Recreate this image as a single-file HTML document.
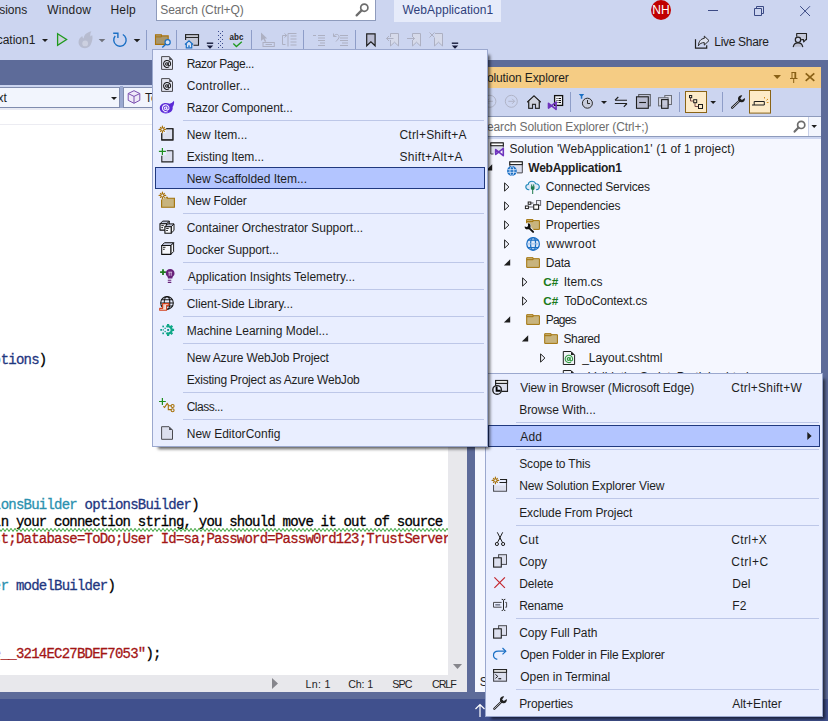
<!DOCTYPE html>
<html lang="en"><head><meta charset="utf-8"><title>WebApplication1 - Microsoft Visual Studio</title>
<style>
*{box-sizing:border-box;margin:0;padding:0}
html,body{width:828px;height:721px;overflow:hidden;background:#ccd5f0}
body{position:relative;font-family:"Liberation Sans",sans-serif;font-size:12px;color:#1e1e1e;line-height:1}
.a{position:absolute}
.t{position:absolute;white-space:nowrap;line-height:14px;height:14px}
.code{position:absolute;white-space:pre;font-family:"Liberation Mono",monospace;font-size:14px;letter-spacing:-0.785px;line-height:16px;height:16px;color:#000;-webkit-text-stroke:0.3px currentColor}
.menu{position:absolute;background:#e9eeff;border:1px solid #9ba8ce;box-shadow:4px 4px 3px -2px rgba(0,0,0,.62)}
.mi{position:absolute;white-space:nowrap;height:22px;line-height:22px}
.sep{position:absolute;height:1px;background:#bdc7e8}
.hl{position:absolute;background:#b3c5ff;border:1px solid #20397f}
svg{position:absolute;overflow:visible}
.fc{letter-spacing:-0.085px}.ty{color:#2b91af}.pa{color:#1f377f}.st{color:#a31515}
</style></head>
<body>
<div class="a" style="left:0px;top:0px;width:828px;height:60px;background:#ccd5f0;"></div>
<div class="a" style="left:0px;top:60px;width:828px;height:661px;background:#5d6b99;"></div>
<div class="a" style="left:0px;top:699px;width:828px;height:22px;background:#40508d;"></div>
<div class="t" style="left:-31.5px;top:3px;">Extensions</div>
<div class="t" style="left:47.3px;top:3px;letter-spacing:0.2px;">Window</div>
<div class="t" style="left:110.5px;top:3px;letter-spacing:0.2px;">Help</div>
<div class="a" style="left:156px;top:-1px;width:220px;height:22px;background:#ffffff;border:1px solid #8e9bbc"></div>
<div class="t" style="left:160.2px;top:3px;letter-spacing:-0.057px;color:#6d6d6d">Search (Ctrl+Q)</div>
<svg style="left:354px;top:2px;" width="16" height="16" viewBox="0 0 16 16"><circle cx="10.300" cy="5.700" r="3.600" fill="none" stroke="#6d6d6d" stroke-width="1.700"/><path d="M7.600 8.400L2.600 13.400" stroke="#6d6d6d" stroke-width="2.200" stroke-linecap="round"/></svg>
<div class="a" style="left:394px;top:0px;width:107px;height:22px;background:#e6ebfa;"></div>
<div class="t" style="left:402.4px;top:3px;letter-spacing:0.071px;color:#2f3f7a">WebApplication1</div>
<div class="a" style="left:651px;top:0;width:20px;height:20px;border-radius:50%;background:#c00000;color:#fff;font-size:12px;line-height:20px;text-align:center">NH</div>
<svg style="left:700px;top:0" width="128" height="22" viewBox="700 0 128 22"><path d="M708 10.500H718" stroke="#3b4a85" stroke-width="1" fill="none"/><path d="M754.500 8.500H761.500V15.500H754.500ZM756.500 8.500V6.500H763.500V13.500H761.500" stroke="#3b4a85" stroke-width="1" fill="none"/><path d="M800.200 6.200L810 16M810 6.200L800.200 16" stroke="#3b4a85" stroke-width="1" fill="none"/></svg>
<div class="t" style="left:-54.5px;top:33px;">WebApplication1</div>
<svg style="left:42px;top:39px" width="6" height="3" viewBox="0 0 6 3"><path d="M0 0H6L3.0 3Z" fill="#1e1e1e"/></svg>
<svg style="left:0;top:0" width="828" height="60" viewBox="0 0 828 60"><path d="M57.600 33.700L66.600 39.500L57.600 45.300Z" fill="#cdd0de" stroke="#1e9a1e" stroke-width="1.300" stroke-linejoin="miter"/><g transform="translate(85.500 39.800) scale(1.07) translate(-85.500 -39.800)"><path d="M85 47.600C81.500 47.600 79 45.100 79 42C79 39.500 80.400 37.400 82.500 36.200C82.600 37.300 83 38.100 83.800 38.500C84 35.500 86.200 32.800 91 31.700C89.900 33.500 89.700 35 90.300 36.700C90.700 36.400 91.300 35.800 91.700 35.300C92.500 38 91.800 40.200 91.100 42.600C90.300 45.600 88 47.600 85 47.600Z" fill="#b7bcd0"/><circle cx="85.200" cy="43.200" r="2.700" fill="#ccd0e0"/></g><path d="M98.700 39H105.300L102 42.300Z" fill="#70727c"/><path d="M122.800 34.500A6.200 6.200 0 1 1 115.200 36" fill="none" stroke="#1a6fc4" stroke-width="1.400"/><path d="M113.200 33.300H117.900V38" fill="none" stroke="#1a6fc4" stroke-width="1.400"/><path d="M133.700 39H140.300L137 42.300Z" fill="#1e1e1e"/><rect x="146" y="30" width="1" height="20" fill="#8e9dc8"/><rect x="176" y="30" width="1" height="20" fill="#8e9dc8"/><rect x="251" y="30" width="1" height="20" fill="#8e9dc8"/><rect x="303" y="30" width="1" height="20" fill="#8e9dc8"/><rect x="355" y="30" width="1" height="20" fill="#8e9dc8"/><path d="M155.500 34.800H161.400V35.900H168.200V44.400H155.500Z" fill="#a8966c" stroke="#a9730c" stroke-width="1.100" stroke-linejoin="miter"/><path d="M155.500 36.900H161.400V35.900" stroke="#a9730c" stroke-width="1" fill="none"/><circle cx="167.600" cy="42.300" r="2.600" fill="#d8e4f6" stroke="#1a6fc4" stroke-width="1.200"/><path d="M165.700 44.300L162.300 47.500" stroke="#1a6fc4" stroke-width="1.400" fill="none"/><path d="M193.500 45.200H198.500V34.700H185.600V40" fill="#c6c9d8" stroke="#212121" stroke-width="1.100"/><rect x="185.600" y="34.700" width="12.900" height="2.700" fill="#dfe2ee" stroke="#212121" stroke-width="1.100"/><path d="M185 44.500L189 40.800L193 44.500M186.300 43.800V47.800H191.700V43.800" fill="#dfe8f8" stroke="#1a6fc4" stroke-width="1.200"/><rect x="188.300" y="45.300" width="1.400" height="2" fill="#1a6fc4"/><path d="M206.8 43.200H213.20000000000002" stroke="#151a3a" stroke-width="1.400"/><path d="M206.8 45.600H213.20000000000002L210.0 48.700Z" fill="#151a3a"/><path d="M451.8 43.200H458.2" stroke="#151a3a" stroke-width="1.400"/><path d="M451.8 45.600H458.2L455.0 48.700Z" fill="#151a3a"/><path d="M218 31h1v1h-1zM222 31h1v1h-1zM218 35h1v1h-1zM222 35h1v1h-1zM218 39h1v1h-1zM222 39h1v1h-1zM218 43h1v1h-1zM222 43h1v1h-1zM218 47h1v1h-1zM222 47h1v1h-1zM220 33h1v1h-1zM220 37h1v1h-1zM220 41h1v1h-1zM220 45h1v1h-1z" fill="#3a4a8c"/><text x="229.600" y="40.200" font-family="Liberation Sans, sans-serif" font-weight="bold" font-size="9" fill="#212121" textLength="13.800" lengthAdjust="spacingAndGlyphs">abc</text><path d="M233.300 43.500L236.400 46.500L241.800 41.700" fill="none" stroke="#1e9a1e" stroke-width="1.300"/><path d="M261 32.600V41L263.300 38.900L265 42L266.200 41.300L264.700 38.500H267.200Z" fill="#adb0c2"/><rect x="263" y="42.500" width="11.300" height="4" fill="none" stroke="#adb0c2" stroke-width="1"/><path d="M265.500 44.500H272" stroke="#adb0c2" stroke-width="1"/><path d="M290.500 33.500V46.500M290.500 33.500H299M293 36H299M293 39H299M293 42H299M293 45H299" stroke="#adb0c2" stroke-width="1" fill="none" transform="translate(-2.500 0)"/><path d="M285.500 44.500H282.500V35.500H286.500M284.500 33.500L286.800 35.500L284.500 37.500" stroke="#adb0c2" stroke-width="1" fill="none"/><path d="M313 35.500H316M318 35.500H325M318 38H325M318 40.500H325M320 43H325M318 45.500H325" stroke="#adb0c2" stroke-width="1" fill="none"/><path d="M340 35.500H348M340 38H348M340 40.500H348M342 43H348M340 45.500H348" stroke="#adb0c2" stroke-width="1" fill="none"/><path d="M333.500 33.500V36.500H336.500M333.700 36.300C335 34 338.500 33.500 339 36.500C339.300 38.500 337.500 39.500 336 41.500" stroke="#adb0c2" stroke-width="1" fill="none"/><path d="M366.700 33.800H375.100V45.800L370.900 41.800L366.700 45.800Z" fill="#b9bcd2" stroke="#212121" stroke-width="1.200" stroke-linejoin="miter"/><path d="M390.500 37V33.500H398.500V46L394.500 42.200L390.500 46V40" fill="#d6daea" stroke="#adb0c2" stroke-width="1"/><path d="M393.500 38.500H386.500M389 36L386.500 38.500L389 41" fill="none" stroke="#adb0c2" stroke-width="1"/><path d="M412.500 37V33.500H420.500V46L416.500 42.200L412.500 46V40" fill="#d6daea" stroke="#adb0c2" stroke-width="1"/><path d="M407 38.500H414.500M412 36L414.500 38.500L412 41" fill="none" stroke="#adb0c2" stroke-width="1"/><path d="M435 33.500H442.500V46L438.500 42.200L434.500 46V38" fill="#d6daea" stroke="#adb0c2" stroke-width="1"/><path d="M429.500 32.500L434.500 37.500M434.500 32.500L429.500 37.500" fill="none" stroke="#adb0c2" stroke-width="1"/><path d="M695.500 39.200V48.200H706.700V45.200" fill="none" stroke="#212121" stroke-width="1.200"/><path d="M698.400 45.800C698.600 41.500 700.800 38.700 704.300 38.400V36.100L709 40.600L704.300 45.100V42.600C701.600 42.600 699.800 43.600 698.400 45.800Z" fill="#dde1ee" stroke="#212121" stroke-width="0.950" stroke-linejoin="round"/><path d="M796.700 36.800V33.500H806.500V39.600H805.800L803.700 42L803.500 39.600H801.200" fill="#c5c9da" stroke="#212121" stroke-width="1.100" stroke-linejoin="round"/><circle cx="798" cy="39.800" r="2.700" fill="#cdd3ea" stroke="#212121" stroke-width="1.200"/><path d="M793.300 46.700C793.800 44.200 795.600 42.900 798 42.900C800.400 42.900 802.200 44.200 802.700 46.700" fill="#b9bdd1" stroke="#212121" stroke-width="1.200" stroke-linecap="round"/></svg>
<div class="t" style="left:714.3px;top:35px;letter-spacing:-0.311px;">Live Share</div>
<div class="a" style="left:0px;top:85px;width:467px;height:2px;background:#ccd5f0;"></div>
<div class="a" style="left:-2px;top:87px;width:122px;height:21px;background:#f2f5fd;border:1px solid #808cae"></div>
<div class="a" style="left:120px;top:86px;width:3px;height:23px;background:#9aa8d0;"></div>
<div class="a" style="left:123px;top:87px;width:344px;height:21px;background:#f2f5fd;border:1px solid #808cae"></div>
<div class="t" style="left:-34.6px;top:91px;">Context</div>
<svg style="left:111px;top:97px" width="6" height="3" viewBox="0 0 6 3"><path d="M0 0H6L3.0 3Z" fill="#1e1e1e"/></svg>
<svg style="left:127px;top:90px" width="14" height="14" viewBox="0 0 14 14"><path d="M7 0.700L12.800 3.500V10.300L7 13.300L1.200 10.300V3.500Z" fill="#efe9f8" stroke="#7b50b0" stroke-width="1" stroke-linejoin="round"/><path d="M1.300 3.600L7 6.400L12.700 3.600M7 6.400V13.200" fill="none" stroke="#7b50b0" stroke-width="1"/></svg>
<div class="t" style="left:145px;top:91px;">ToDoContext</div>
<div class="a" style="left:0px;top:108px;width:467px;height:2px;background:#e9eaf3;"></div>
<div class="a" style="left:0px;top:110px;width:467px;height:582px;background:#ffffff;"></div>
<div class="a" style="left:0px;top:124px;width:448px;height:1px;background:#ececf2;"></div>
<div class="a" style="left:448px;top:110px;width:19px;height:582px;background:#e8e8ec;"></div>
<div class="a" style="left:0px;top:675px;width:467px;height:17px;background:#e8e8ec;"></div>
<svg style="left:453px;top:663.5px" width="9" height="5" viewBox="0 0 9 5"><path d="M0 0H9L4.500 5Z" fill="#86868c"/></svg>
<svg style="left:272px;top:678px" width="7" height="11" viewBox="0 0 7 11"><path d="M0 0V11L6 5.500Z" fill="#86868c"/></svg>
<div class="t" style="left:305.6px;top:677px;letter-spacing:0.25px;font-size:10.7px">Ln: 1</div>
<div class="t" style="left:348.2px;top:677px;letter-spacing:-0.15px;font-size:10.7px">Ch: 1</div>
<div class="t" style="left:392.2px;top:677px;letter-spacing:-0.9px;font-size:10.7px">SPC</div>
<div class="t" style="left:432.0px;top:677px;letter-spacing:-1.067px;font-size:10.7px">CRLF</div>
<div class="a" style="left:0;top:110px;width:448px;height:565px;overflow:hidden">
<div class="code" style="left:-7.6px;top:242px"><span class="pa"><span class="fc">p</span>tions</span>)</div>
<div class="code" style="left:-7.6px;top:387px"><span class="ty"><span class="fc">i</span>onsBuilder</span> <span class="pa">optionsBuilder</span>)</div>
<div class="code" style="left:-7.6px;top:404px"><span class="fc">i</span>n your connection string, you should move it out of source code.</div>
<svg style="left:0;top:418px" width="448" height="5" viewBox="0 0 448 5"><path d="M-1 0.300 L1 3.5 L3 0.3 L5 3.5 L7 0.3 L9 3.5 L11 0.3 L13 3.5 L15 0.3 L17 3.5 L19 0.3 L21 3.5 L23 0.3 L25 3.5 L27 0.3 L29 3.5 L31 0.3 L33 3.5 L35 0.3 L37 3.5 L39 0.3 L41 3.5 L43 0.3 L45 3.5 L47 0.3 L49 3.5 L51 0.3 L53 3.5 L55 0.3 L57 3.5 L59 0.3 L61 3.5 L63 0.3 L65 3.5 L67 0.3 L69 3.5 L71 0.3 L73 3.5 L75 0.3 L77 3.5 L79 0.3 L81 3.5 L83 0.3 L85 3.5 L87 0.3 L89 3.5 L91 0.3 L93 3.5 L95 0.3 L97 3.5 L99 0.3 L101 3.5 L103 0.3 L105 3.5 L107 0.3 L109 3.5 L111 0.3 L113 3.5 L115 0.3 L117 3.5 L119 0.3 L121 3.5 L123 0.3 L125 3.5 L127 0.3 L129 3.5 L131 0.3 L133 3.5 L135 0.3 L137 3.5 L139 0.3 L141 3.5 L143 0.3 L145 3.5 L147 0.3 L149 3.5 L151 0.3 L153 3.5 L155 0.3 L157 3.5 L159 0.3 L161 3.5 L163 0.3 L165 3.5 L167 0.3 L169 3.5 L171 0.3 L173 3.5 L175 0.3 L177 3.5 L179 0.3 L181 3.5 L183 0.3 L185 3.5 L187 0.3 L189 3.5 L191 0.3 L193 3.5 L195 0.3 L197 3.5 L199 0.3 L201 3.5 L203 0.3 L205 3.5 L207 0.3 L209 3.5 L211 0.3 L213 3.5 L215 0.3 L217 3.5 L219 0.3 L221 3.5 L223 0.3 L225 3.5 L227 0.3 L229 3.5 L231 0.3 L233 3.5 L235 0.3 L237 3.5 L239 0.3 L241 3.5 L243 0.3 L245 3.5 L247 0.3 L249 3.5 L251 0.3 L253 3.5 L255 0.3 L257 3.5 L259 0.3 L261 3.5 L263 0.3 L265 3.5 L267 0.3 L269 3.5 L271 0.3 L273 3.5 L275 0.3 L277 3.5 L279 0.3 L281 3.5 L283 0.3 L285 3.5 L287 0.3 L289 3.5 L291 0.3 L293 3.5 L295 0.3 L297 3.5 L299 0.3 L301 3.5 L303 0.3 L305 3.5 L307 0.3 L309 3.5 L311 0.3 L313 3.5 L315 0.3 L317 3.5 L319 0.3 L321 3.5 L323 0.3 L325 3.5 L327 0.3 L329 3.5 L331 0.3 L333 3.5 L335 0.3 L337 3.5 L339 0.3 L341 3.5 L343 0.3 L345 3.5 L347 0.3 L349 3.5 L351 0.3 L353 3.5 L355 0.3 L357 3.5 L359 0.3 L361 3.5 L363 0.3 L365 3.5 L367 0.3 L369 3.5 L371 0.3 L373 3.5 L375 0.3 L377 3.5 L379 0.3 L381 3.5 L383 0.3 L385 3.5 L387 0.3 L389 3.5 L391 0.3 L393 3.5 L395 0.3 L397 3.5 L399 0.3 L401 3.5 L403 0.3 L405 3.5 L407 0.3 L409 3.5 L411 0.3 L413 3.5 L415 0.3 L417 3.5 L419 0.3 L421 3.5 L423 0.3 L425 3.5 L427 0.3 L429 3.5 L431 0.3 L433 3.5 L435 0.3 L437 3.5 L439 0.3 L441 3.5 L443 0.3 L445 3.5 L447 0.3 L449 3.5 L451 0.3" fill="none" stroke="#2f9e2f" stroke-width="0.950" stroke-linejoin="round"/></svg>
<div class="code" style="left:-7.6px;top:421px"><span class="st"><span class="fc">s</span>t;Database=ToDo;User Id=sa;Password=Passw0rd123;TrustServerCertificate=true</span></div>
<div class="code" style="left:-7.6px;top:468px"><span class="ty"><span class="fc">e</span>r</span> <span class="pa">modelBuilder</span>)</div>
<div class="code" style="left:-7.6px;top:536px"><span class="st"><span class="fc">e</span>__3214EC27BDEF7053"</span>);</div>
</div>
<div class="a" style="left:475px;top:67px;width:346px;height:21px;background:#f5cc84;"></div>
<div class="t" style="left:479px;top:71px;letter-spacing:-0.1px">Solution Explorer</div>
<div class="a" style="left:475px;top:88px;width:346px;height:29px;background:#ccd5f0;"></div>
<div class="a" style="left:475px;top:116px;width:346px;height:21px;background:#ffffff;border:1px solid #8e9bbc;border-right:none"></div>
<div class="a" style="left:808px;top:117px;width:13px;height:19px;background:#f2f5fd;border-left:1px solid #c8d0e8"></div>
<div class="t" style="left:479px;top:120px;color:#6d6d6d;letter-spacing:-0.11px">Search Solution Explorer (Ctrl+;)</div>
<svg style="left:475px;top:60px" width="353" height="80" viewBox="475 60 353 80"><path d="M773.400 75H781L777.200 79Z" fill="#8a6116"/><path d="M791.500 72.500H796M792 72.500V78.500M790 78.500H797.500M793.700 78.500V83" fill="none" stroke="#8a6116" stroke-width="1"/><path d="M795.300 72V79" stroke="#8a6116" stroke-width="1.800"/><path d="M805.700 73.300L814.300 80.900M814.300 73.300L805.700 80.900" fill="none" stroke="#8a6116" stroke-width="1.700"/><circle cx="489.9" cy="101.300" r="6" fill="none" stroke="#adb0c2" stroke-width="0.9"/><path d="M492.9 101.300H486.9M489.09999999999997 98.800L486.59999999999997 101.300L489.09999999999997 103.800" fill="none" stroke="#adb0c2" stroke-width="0.900"/><circle cx="511.3" cy="101.300" r="6" fill="none" stroke="#adb0c2" stroke-width="0.9"/><path d="M508.3 101.300H514.3M512.1 98.800L514.6 101.300L512.1 103.800" fill="none" stroke="#adb0c2" stroke-width="0.900"/><path d="M527.300 102.200L534 95.900L540.700 102.200M528.800 101V108.300H532.500V104.300H535.500V108.300H539.200V101" fill="#d0d3de" stroke="#2a2a2a" stroke-width="1.100" stroke-linejoin="miter"/><path d="M534 96.600L539 101.300V108H535.800V104H532.200V108H529V101.300Z" fill="#d0d3de"/><path d="M527.300 102.200L534 95.900L540.700 102.200M528.800 101.200V108.300H532.500V104.300H535.500V108.300H539.200V101.200" fill="none" stroke="#2a2a2a" stroke-width="1.100"/><rect x="554.600" y="95.600" width="8" height="9.800" fill="#f2f3f8" stroke="#111" stroke-width="1.300"/><path d="M556.500 98.500H557.500M558.500 98.500H561M556.500 100.500H557.500M558.500 100.500H561M556.500 102.500H557.500M558.500 102.500H561" stroke="#111" stroke-width="1" fill="none"/><path d="M556.10 102.10V109.40L548.50 103.30V108.10Z" fill="none" stroke="#6f35bd" stroke-width="1.60" stroke-linejoin="round"/><rect x="570" y="92" width="1" height="20" fill="#8e9dc8"/><rect x="679" y="92" width="1" height="20" fill="#8e9dc8"/><rect x="722" y="92" width="1" height="20" fill="#8e9dc8"/><path d="M578.800 94H584.200L582.300 96.300V98.800H580.800V96.300Z" fill="#1a6fc4"/><circle cx="587.400" cy="103.200" r="5" fill="#c8ccdc" stroke="#2a2a2a" stroke-width="1"/><path d="M587.500 100V103.500H590" fill="none" stroke="#2a2a2a" stroke-width="1"/><path d="M601 101H607L604 104Z" fill="#1e1e1e"/><path d="M627 100.200H615M618.300 97L615 100.200M614.800 103.500H627M623.800 106.800L627 103.500" fill="none" stroke="#1e1e1e" stroke-width="1.100"/><rect x="638.700" y="94.500" width="11.600" height="11.400" fill="#c0c3d6" stroke="#55585f" stroke-width="1"/><rect x="636.500" y="96.800" width="11.800" height="11.500" fill="#b8bbd0" stroke="#1e1e1e" stroke-width="1.100"/><path d="M639.200 102.500H646" stroke="#1e1e1e" stroke-width="1.100"/><rect x="664.800" y="95.500" width="6.700" height="9" fill="#d9dbe6" stroke="#6b6e78" stroke-width="1"/><rect x="658.500" y="97.700" width="9.600" height="8.200" fill="#d0d3e0" stroke="#6b6e78" stroke-width="1"/><rect x="661.600" y="99.600" width="6.500" height="8.700" fill="#c3c6d8" fill-opacity="0.850" stroke="#1e1e1e" stroke-width="1.100"/><rect x="685.500" y="91.500" width="21" height="21" fill="#fdebc8" stroke="#8a6416" stroke-width="1"/><path d="M690.500 97.500V101H693.500M695 102.500V106.500H698.500" fill="none" stroke="#7a4a4a" stroke-width="1"/><rect x="689.500" y="95.500" width="2.200" height="2.200" fill="#fdebc8" stroke="#1e1e1e" stroke-width="1"/><rect x="693.700" y="99.700" width="3" height="3" fill="#fdebc8" stroke="#1e1e1e" stroke-width="1"/><rect x="698.500" y="104.500" width="4" height="4" fill="#fdebc8" stroke="#1e1e1e" stroke-width="1"/><path d="M710.300 101H716L713.150 104Z" fill="#1e1e1e"/><g transform="translate(730,94)"><path d="M2.2 13.7L9.8 6.5" stroke="#1e1e1e" stroke-width="2.3" stroke-linecap="round" fill="none"/><path d="M2.4000000000000004 13.5L9.0 7.300000000000001" stroke="#c4c6d0" stroke-width="0.9" stroke-linecap="round" fill="none"/><path d="M12.28 1.40A3.5 3.5 0 1 0 14.90 4.03L11.93 6.12L10.18 4.38Z" fill="#1e1e1e"/></g><rect x="749.500" y="90.500" width="21" height="22.600" fill="#fdebc8" stroke="#8a6416" stroke-width="1"/><path d="M752 105H764.300V101.500H754.200V105" fill="none" stroke="#1e1e1e" stroke-width="1"/><path d="M764.500 97V98.500M766.500 100.300L768 99M766.800 102.500H768.500" fill="none" stroke="#d38b1b" stroke-width="1"/><circle cx="801.200" cy="124.900" r="3.600" fill="none" stroke="#6d6d6d" stroke-width="1.700"/><path d="M798.500 127.600L794.600 131.600" stroke="#6d6d6d" stroke-width="2.200" stroke-linecap="round"/><path d="M811.400 125H817L814.200 128Z" fill="#1e1e1e"/></svg>
<div class="a" style="left:475px;top:137px;width:346px;height:2px;background:#ccd5f0;"></div>
<div class="a" style="left:475px;top:139px;width:346px;height:553px;background:#f5f7ff;"></div>
<div class="a" style="left:475px;top:139px;width:346px;height:553px;overflow:hidden">
<svg style="left:15px;top:2px" width="16" height="16" viewBox="0 0 16 16"><path d="M3.500 13H0.800V1.900H13.300V6.500" fill="#dcdfee" stroke="#4a4a50" stroke-width="1"/><rect x="0.800" y="1.900" width="12.500" height="2.800" fill="#fff" stroke="#212121" stroke-width="1.100"/><path d="M13.30 7.40V14.70L5.70 8.60V13.40Z" fill="none" stroke="#6f35bd" stroke-width="1.60" stroke-linejoin="round"/></svg>
<div class="t" style="left:34.50px;top:3px;letter-spacing:0.081px;">Solution 'WebApplication1' (1 of 1 project)</div>
<svg style="left:11px;top:25px" width="7" height="7" viewBox="0 0 7 7"><path d="M6.200 0.300V6.600H-0.100Z" fill="#1e1e1e"/></svg>
<svg style="left:32px;top:21px" width="16" height="16" viewBox="0 0 16 16"><path d="M10 12.900H15.300V1.800H2.800V6.500" fill="#dcdfee" stroke="#4a4a50" stroke-width="1"/><rect x="2.800" y="1.800" width="12.500" height="2.800" fill="#fff" stroke="#212121" stroke-width="1.100"/><circle cx="4.900" cy="11" r="4.900" fill="#1a6fc4"/><g fill="none" stroke="#e6efff" stroke-width="0.800"><path d="M0.400 9.700H9.400M0.400 12.300H9.400"/><ellipse cx="4.900" cy="11" rx="2" ry="4.500"/></g></svg>
<div class="t" style="left:53.30px;top:22px;letter-spacing:-0.257px;font-weight:bold;">WebApplication1</div>
<svg style="left:29px;top:42.7px" width="6" height="10" viewBox="0 0 6 10"><path d="M0.600 0.900V9.100L4.900 5Z" fill="none" stroke="#1e1e1e" stroke-width="1"/></svg>
<svg style="left:50px;top:40px" width="16" height="16" viewBox="0 0 16 16"><path d="M4.300 10.700H3.800C2 10.700 0.800 9.500 0.800 8C0.800 6.600 1.900 5.600 3.200 5.500C3.500 3.600 5.100 2.300 7.100 2.300C8.800 2.300 10.200 3.300 10.800 4.700C12.900 4.600 14.300 6 14.300 7.800C14.300 9.400 13.100 10.700 11.500 10.700H11" fill="#dfe9f7" stroke="#1b86b8" stroke-width="1.100"/><path d="M5.900 7.300H9.500V9.300C9.500 10.400 8.700 11.100 7.700 11.100C6.700 11.100 5.900 10.400 5.900 9.300Z" fill="#1e7b4e"/><path d="M6.700 5.400V7.500M8.700 5.400V7.500M7.700 11V15" stroke="#1e7b4e" stroke-width="1" fill="none"/></svg>
<div class="t" style="left:70.80px;top:41px;letter-spacing:-0.188px;">Connected Services</div>
<svg style="left:29px;top:61.7px" width="6" height="10" viewBox="0 0 6 10"><path d="M0.600 0.900V9.100L4.900 5Z" fill="none" stroke="#1e1e1e" stroke-width="1"/></svg>
<svg style="left:50px;top:59px" width="16" height="16" viewBox="0 0 16 16"><path d="M4.200 5H8.500M3.800 9H8.500" stroke="#8d8d95" stroke-width="1.300"/><rect x="11.500" y="2.500" width="4.100" height="4.900" fill="#e9eaf1" stroke="#6a6a72" stroke-width="1"/><rect x="0.400" y="8" width="3" height="2.600" fill="#fff" stroke="#212121" stroke-width="1"/><rect x="3.200" y="4" width="2.600" height="2.300" fill="#fff" stroke="#212121" stroke-width="1"/><rect x="8.700" y="6.800" width="4.900" height="4.500" fill="#fff" stroke="#212121" stroke-width="1.100"/></svg>
<div class="t" style="left:70.80px;top:60px;letter-spacing:-0.182px;">Dependencies</div>
<svg style="left:29px;top:80.7px" width="6" height="10" viewBox="0 0 6 10"><path d="M0.600 0.900V9.100L4.900 5Z" fill="none" stroke="#1e1e1e" stroke-width="1"/></svg>
<svg style="left:50px;top:78px" width="16" height="16" viewBox="0 0 16 16"><path d="M1.6 2.6H8.0V3.6H14.4V12.4H1.6Z" fill="#c8b47e" stroke="#a3730a" stroke-width="1" stroke-linejoin="miter"/><path d="M1.6 4.6H8.0V3.6" stroke="#a3730a" stroke-width="1" fill="none"/><path d="M3.400 10.200L8.300 15" stroke="#f5f7ff" stroke-width="3.600" stroke-linecap="round"/><circle cx="2.700" cy="9.600" r="3.500" fill="#f5f7ff"/><path d="M4 10.900L8.100 14.900" stroke="#101010" stroke-width="2" stroke-linecap="round"/><path d="M0.700 7.200A3 3 0 1 0 5.100 7.300L3.500 9.300L1.900 9.200Z" fill="#101010" transform="rotate(-45 2.800 9.600)"/></svg>
<div class="t" style="left:70.80px;top:79px;letter-spacing:-0.089px;">Properties</div>
<svg style="left:29px;top:99.7px" width="6" height="10" viewBox="0 0 6 10"><path d="M0.600 0.900V9.100L4.900 5Z" fill="none" stroke="#1e1e1e" stroke-width="1"/></svg>
<svg style="left:50px;top:97px" width="16" height="16" viewBox="0 0 16 16"><g fill="none" stroke="#1a6fc4" stroke-width="1.250"><circle cx="8.100" cy="7.900" r="6.300" fill="#dfe9f8"/><ellipse cx="8.100" cy="7.900" rx="2.500" ry="6.300"/><path d="M2.800 4.200H13.400M2.800 11.700H13.400"/></g><path d="M2 7.900H14.200" stroke="#9dbde6" stroke-width="1" fill="none"/></svg>
<div class="t" style="left:71.40px;top:98px;letter-spacing:0.4px;">wwwroot</div>
<svg style="left:29px;top:120px" width="7" height="7" viewBox="0 0 7 7"><path d="M6.200 0.300V6.600H-0.100Z" fill="#1e1e1e"/></svg>
<svg style="left:50px;top:116px" width="16" height="16" viewBox="0 0 16 16"><path d="M1.7 2.7H8.1V3.7H14.399999999999999V12.399999999999999H1.7Z" fill="#c8b47e" stroke="#a3730a" stroke-width="1" stroke-linejoin="miter"/><path d="M1.7 4.7H8.1V3.7" stroke="#a3730a" stroke-width="1" fill="none"/></svg>
<div class="t" style="left:70.80px;top:117px;letter-spacing:-0.2px;">Data</div>
<svg style="left:47px;top:137.7px" width="6" height="10" viewBox="0 0 6 10"><path d="M0.600 0.900V9.100L4.900 5Z" fill="none" stroke="#1e1e1e" stroke-width="1"/></svg>
<svg style="left:68px;top:135px" width="16" height="16" viewBox="0 0 16 16"><text x="0.200" y="12.400" font-family="Liberation Sans, sans-serif" font-weight="bold" font-size="11.500" fill="#1a7a1a" textLength="15" lengthAdjust="spacingAndGlyphs">C#</text></svg>
<div class="t" style="left:88.70px;top:136px;letter-spacing:0.033px;">Item.cs</div>
<svg style="left:47px;top:156.7px" width="6" height="10" viewBox="0 0 6 10"><path d="M0.600 0.900V9.100L4.900 5Z" fill="none" stroke="#1e1e1e" stroke-width="1"/></svg>
<svg style="left:68px;top:154px" width="16" height="16" viewBox="0 0 16 16"><text x="0.200" y="12.400" font-family="Liberation Sans, sans-serif" font-weight="bold" font-size="11.500" fill="#1a7a1a" textLength="15" lengthAdjust="spacingAndGlyphs">C#</text></svg>
<div class="t" style="left:89.20px;top:155px;letter-spacing:-0.123px;">ToDoContext.cs</div>
<svg style="left:29px;top:177px" width="7" height="7" viewBox="0 0 7 7"><path d="M6.200 0.300V6.600H-0.100Z" fill="#1e1e1e"/></svg>
<svg style="left:50px;top:173px" width="16" height="16" viewBox="0 0 16 16"><path d="M1.7 2.7H8.1V3.7H14.399999999999999V12.399999999999999H1.7Z" fill="#c8b47e" stroke="#a3730a" stroke-width="1" stroke-linejoin="miter"/><path d="M1.7 4.7H8.1V3.7" stroke="#a3730a" stroke-width="1" fill="none"/></svg>
<div class="t" style="left:70.80px;top:174px;letter-spacing:-0.8px;">Pages</div>
<svg style="left:47px;top:196px" width="7" height="7" viewBox="0 0 7 7"><path d="M6.200 0.300V6.600H-0.100Z" fill="#1e1e1e"/></svg>
<svg style="left:68px;top:192px" width="16" height="16" viewBox="0 0 16 16"><path d="M1.7 2.7H8.1V3.7H14.399999999999999V12.399999999999999H1.7Z" fill="#c8b47e" stroke="#a3730a" stroke-width="1" stroke-linejoin="miter"/><path d="M1.7 4.7H8.1V3.7" stroke="#a3730a" stroke-width="1" fill="none"/></svg>
<div class="t" style="left:88.50px;top:193px;letter-spacing:-0.4px;">Shared</div>
<svg style="left:65px;top:213.7px" width="6" height="10" viewBox="0 0 6 10"><path d="M0.600 0.900V9.100L4.900 5Z" fill="none" stroke="#1e1e1e" stroke-width="1"/></svg>
<svg style="left:86px;top:211px" width="16" height="16" viewBox="0 0 16 16"><path d="M2.3 1.5H10.0L13.6 5.1V14.5H2.3Z" fill="#f0f1f6" stroke="#212121" stroke-width="1" stroke-linejoin="round"/><path d="M10.0 1.5V5.1H13.6Z" fill="#212121"/><g fill="none" stroke="#2e9b3e" stroke-width="1.1" stroke-linecap="round"><circle cx="7.60" cy="9.00" r="1.33"/><path d="M9.13 7.57V10.10C9.43 11.16 11.60 11.30 11.60 8.90A3.7 3.7 0 1 0 9.57 12.23"/></g></svg>
<div class="t" style="left:107.20px;top:212px;letter-spacing:-0.046px;">_Layout.cshtml</div>
<svg style="left:86px;top:230px" width="16" height="16" viewBox="0 0 16 16"><path d="M2.3 1.5H10.0L13.6 5.1V14.5H2.3Z" fill="#f0f1f6" stroke="#212121" stroke-width="1" stroke-linejoin="round"/><path d="M10.0 1.5V5.1H13.6Z" fill="#212121"/><g fill="none" stroke="#2e9b3e" stroke-width="1.1" stroke-linecap="round"><circle cx="7.60" cy="9.00" r="1.33"/><path d="M9.13 7.57V10.10C9.43 11.16 11.60 11.30 11.60 8.90A3.7 3.7 0 1 0 9.57 12.23"/></g></svg>
<div class="t" style="left:106.50px;top:231px;letter-spacing:0px;">_ValidationScriptsPartial.cshtml</div>
</div>
<div class="t" style="left:479.7px;top:675px;">S</div>
<svg style="left:472px;top:702px" width="16" height="16" viewBox="0 0 16 16"><path d="M8 15V2.500M3.500 7L8 2.500L12.500 7" fill="none" stroke="#ffffff" stroke-width="1.200"/></svg>
<div class="menu" style="left:485px;top:373px;width:338px;height:344px">
<svg style="left:6px;top:5px" width="16" height="16" viewBox="0 0 16 16"><path d="M9.500 12.400H15.500V1.500H3.600V7" fill="#dcdfee" stroke="#212121" stroke-width="1.1"/><rect x="3.600" y="1.500" width="11.900" height="2.900" fill="#fff" stroke="#212121" stroke-width="1.200"/><circle cx="5.100" cy="10.900" r="4.300" fill="#e9eeff" stroke="#212121" stroke-width="1.400"/><path d="M4.600 7.400V11.700H8.600" fill="none" stroke="#000" stroke-width="1.900"/></svg>
<div class="mi" style="left:34.20px;top:3px;letter-spacing:-0.097px">View in Browser (Microsoft Edge)</div>
<div class="mi" style="left:245.30px;top:3px;letter-spacing:0.218px">Ctrl+Shift+W</div>
<div class="mi" style="left:33.20px;top:25px;letter-spacing:-0.062px">Browse With...</div>
<div class="sep" style="left:30px;top:48px;width:303px"></div>
<div class="hl" style="left:2px;top:51px;width:332px;height:22px"></div>
<div class="mi" style="left:34.20px;top:52px;letter-spacing:0.2px">Add</div>
<svg style="left:321px;top:58px" width="5" height="8" viewBox="0 0 5 8"><path d="M0.300 0V8L4.600 4Z" fill="#1e1e1e"/></svg>
<div class="sep" style="left:30px;top:75px;width:303px"></div>
<div class="mi" style="left:33.20px;top:79px;letter-spacing:-0.15px">Scope to This</div>
<svg style="left:6px;top:103px" width="16" height="16" viewBox="0 0 16 16"><path d="M1.600 8V14.100H14.500V2.500H8" fill="none" stroke="#4a4a50" stroke-width="1.1"/><path d="M2.200 8.500H14V13.500H2.200Z" fill="#dcdfee"/><path d="M8 2.500H14.500V5.500H7.500" fill="none" stroke="#212121" stroke-width="1.100"/><path d="M4.90 3.40L6.70 3.40M4.53 4.53L5.38 5.38M3.40 4.90L3.40 6.70M2.27 4.53L1.42 5.38M1.90 3.40L0.10 3.40M2.27 2.27L1.42 1.42M3.40 1.90L3.40 0.10M4.53 2.27L5.38 1.42" stroke="#a8720a" stroke-width="1.15" fill="none" stroke-linecap="round"/></svg>
<div class="mi" style="left:33.20px;top:101px;letter-spacing:-0.104px">New Solution Explorer View</div>
<div class="sep" style="left:30px;top:124px;width:303px"></div>
<div class="mi" style="left:33.20px;top:128px;letter-spacing:-0.084px">Exclude From Project</div>
<div class="sep" style="left:30px;top:151px;width:303px"></div>
<svg style="left:6px;top:157px" width="16" height="16" viewBox="0 0 16 16"><g fill="none" stroke="#212121" stroke-width="1"><path d="M5.300 1.300L10.400 11.300M10.700 1.300L5.600 11.300"/><circle cx="4.900" cy="13" r="1.600" fill="#dcdfee"/><circle cx="11.100" cy="13" r="1.600" fill="#dcdfee"/></g><circle cx="8" cy="7.700" r="0.900" fill="#212121"/></svg>
<div class="mi" style="left:33.20px;top:155px;letter-spacing:0.4px">Cut</div>
<div class="mi" style="left:245.30px;top:155px;letter-spacing:0.36px">Ctrl+X</div>
<svg style="left:6px;top:179px" width="16" height="16" viewBox="0 0 16 16"><rect x="6.600" y="1.700" width="7.900" height="9.700" fill="#dcdfee" stroke="#4a4a50" stroke-width="1"/><rect x="1.600" y="4.800" width="7.700" height="9.300" fill="#dcdfee" stroke="#212121" stroke-width="1.100"/></svg>
<div class="mi" style="left:33.20px;top:177px;letter-spacing:-0.067px">Copy</div>
<div class="mi" style="left:245.30px;top:177px;letter-spacing:0.52px">Ctrl+C</div>
<svg style="left:6px;top:201px" width="16" height="16" viewBox="0 0 16 16"><path d="M2.400 2.400L12.900 12.900M12.900 2.400L2.400 12.900" stroke="#c4262e" stroke-width="1.200" fill="none"/></svg>
<div class="mi" style="left:33.20px;top:199px;letter-spacing:-0.08px">Delete</div>
<div class="mi" style="left:246.30px;top:199px;letter-spacing:0px">Del</div>
<svg style="left:6px;top:223px" width="16" height="16" viewBox="0 0 16 16"><path d="M9.600 5.400H1.500V10.200H9.600" fill="none" stroke="#4a4a50" stroke-width="1"/><path d="M3.300 7.800H8.200" stroke="#7a7f92" stroke-width="1.600"/><path d="M9.700 2.300C10.700 2.300 11.300 2.700 11.500 3.300C11.700 2.700 12.300 2.300 13.300 2.300M9.700 13.500C10.700 13.500 11.300 13.100 11.500 12.500C11.700 13.100 12.300 13.500 13.300 13.500M11.500 3.300V12.500" fill="none" stroke="#212121" stroke-width="1"/><path d="M13.300 5.400H14.600V10.200H13.300" fill="none" stroke="#4a4a50" stroke-width="1"/></svg>
<div class="mi" style="left:33.20px;top:221px;letter-spacing:-0.24px">Rename</div>
<div class="mi" style="left:246.30px;top:221px;letter-spacing:0px">F2</div>
<div class="sep" style="left:30px;top:244px;width:303px"></div>
<svg style="left:6px;top:250px" width="16" height="16" viewBox="0 0 16 16"><rect x="6.600" y="1.700" width="7.900" height="9.700" fill="#dcdfee" stroke="#4a4a50" stroke-width="1"/><rect x="1.600" y="4.800" width="7.700" height="9.300" fill="#dcdfee" stroke="#212121" stroke-width="1.100"/></svg>
<div class="mi" style="left:33.20px;top:248px;letter-spacing:-0.031px">Copy Full Path</div>
<svg style="left:6px;top:272px" width="16" height="16" viewBox="0 0 16 16"><path d="M13.600 5.200H6.200C3.200 5.200 1.500 7 1.500 9.200C1.500 11.300 3 12.700 5.300 13.300" fill="none" stroke="#1a6fc4" stroke-width="1.200"/><path d="M10.500 2L13.800 5.200L10.500 8.400" fill="none" stroke="#1a6fc4" stroke-width="1.200"/></svg>
<div class="mi" style="left:34.20px;top:270px;letter-spacing:-0.2px">Open Folder in File Explorer</div>
<svg style="left:6px;top:294px" width="16" height="16" viewBox="0 0 16 16"><rect x="1.600" y="1.600" width="12.900" height="11.600" fill="#dcdfee" stroke="#4a4a50" stroke-width="1.100"/><rect x="1.600" y="1.600" width="12.900" height="2.700" fill="#fff" stroke="#212121" stroke-width="1.100"/><path d="M3.400 6.400L5.800 8.400L3.400 10.400" fill="none" stroke="#212121" stroke-width="1"/><path d="M6.400 10.700H9.200" stroke="#212121" stroke-width="1.200"/></svg>
<div class="mi" style="left:34.20px;top:292px;letter-spacing:-0.027px">Open in Terminal</div>
<div class="sep" style="left:30px;top:315px;width:303px"></div>
<svg style="left:6px;top:321px" width="16" height="16" viewBox="0 0 16 16"><path d="M2.3 13.7L9.700000000000001 6.5" stroke="#212121" stroke-width="2.3" stroke-linecap="round" fill="none"/><path d="M2.5 13.5L8.9 7.300000000000001" stroke="#c4c6d0" stroke-width="0.9" stroke-linecap="round" fill="none"/><path d="M12.18 1.40A3.5 3.5 0 1 0 14.80 4.03L11.83 6.12L10.08 4.38Z" fill="#212121"/></svg>
<div class="mi" style="left:33.20px;top:319px;letter-spacing:-0.089px">Properties</div>
<div class="mi" style="left:246.20px;top:319px;letter-spacing:-0.025px">Alt+Enter</div>
</div>
<div class="menu" style="left:152px;top:49px;width:336px;height:398px">
<svg style="left:6px;top:5px" width="16" height="16" viewBox="0 0 16 16"><path d="M2.6 1.6H10.2L13.5 4.9V14.4H2.6Z" fill="#e3e5f1" stroke="#4a4a50" stroke-width="1" stroke-linejoin="round"/><path d="M10.2 1.6V4.9H13.5Z" fill="#4a4a50"/><g fill="none" stroke="#1a1a1a" stroke-width="1.05" stroke-linecap="round"><circle cx="7.80" cy="9.00" r="1.26"/><path d="M9.26 7.64V10.03C9.56 11.04 11.60 11.17 11.60 8.90A3.5 3.5 0 1 0 9.67 12.05"/></g></svg>
<div class="mi" style="left:33.70px;top:3px;letter-spacing:-0.483px">Razor Page...</div>
<svg style="left:6px;top:27px" width="16" height="16" viewBox="0 0 16 16"><path d="M2.6 1.6H10.2L13.5 4.9V14.4H2.6Z" fill="#e3e5f1" stroke="#4a4a50" stroke-width="1" stroke-linejoin="round"/><path d="M10.2 1.6V4.9H13.5Z" fill="#4a4a50"/><g fill="none" stroke="#1a1a1a" stroke-width="1.05" stroke-linecap="round"><circle cx="7.80" cy="9.00" r="1.26"/><path d="M9.26 7.64V10.03C9.56 11.04 11.60 11.17 11.60 8.90A3.5 3.5 0 1 0 9.67 12.05"/></g></svg>
<div class="mi" style="left:33.70px;top:25px;letter-spacing:0.15px">Controller...</div>
<svg style="left:6px;top:49px" width="16" height="16" viewBox="0 0 16 16"><path d="M0.800 9.200C0.800 6.200 3.300 4 6.700 4C8.300 4 9.600 4.300 10.600 4.700C12.300 4.400 13.800 3.400 15 1.800C15.400 4.400 14.800 6.400 13.600 8.100C13.700 8.500 13.700 8.800 13.700 9.200C13.700 12.200 10.600 14.400 6.800 14.400C3.300 14.400 0.800 12.200 0.800 9.200Z" fill="#5b2bd6"/><g fill="none" stroke="#efeaff" stroke-width="1.1" stroke-linecap="round"><circle cx="6.40" cy="9.20" r="1.19"/><path d="M7.79 7.91V10.17C8.09 11.12 10.00 11.24 10.00 9.10A3.3 3.3 0 1 0 8.19 12.07"/></g><path d="M4.500 13.600H9" stroke="#8f6bf0" stroke-width="0.8"/></svg>
<div class="mi" style="left:33.70px;top:47px;letter-spacing:-0.071px">Razor Component...</div>
<div class="sep" style="left:30px;top:70px;width:301px"></div>
<svg style="left:6px;top:76px" width="16" height="16" viewBox="0 0 16 16"><path d="M7.300 2.800H13.900V13.900H2.800V7.300" fill="none" stroke="#212121" stroke-width="1.1"/><path d="M3.400 7.300V13.300H13.300V3.400H7.300V7.300Z" fill="#dcdfee"/><path d="M7.300 2.800H13.900V13.900H2.800V7.300" fill="none" stroke="#212121" stroke-width="1.1"/><path d="M4.90 3.40L6.70 3.40M4.53 4.53L5.38 5.38M3.40 4.90L3.40 6.70M2.27 4.53L1.42 5.38M1.90 3.40L0.10 3.40M2.27 2.27L1.42 1.42M3.40 1.90L3.40 0.10M4.53 2.27L5.38 1.42" stroke="#a8720a" stroke-width="1.15" fill="none" stroke-linecap="round"/></svg>
<div class="mi" style="left:33.70px;top:74px;letter-spacing:0.0px">New Item...</div>
<div class="mi" style="left:246.50px;top:74px;letter-spacing:0.2px">Ctrl+Shift+A</div>
<svg style="left:6px;top:98px" width="16" height="16" viewBox="0 0 16 16"><path d="M3.400 7.300V13.300H13.300V3.400H7.300V7.300Z" fill="#dcdfee"/><path d="M7.800 2.800H13.900V13.900H2.800V7.800" fill="none" stroke="#212121" stroke-width="1.1"/><path d="M-0.10000000000000009 3.4H6.9M3.4 -0.10000000000000009V6.9" stroke="#1e8e1e" stroke-width="1.2" fill="none"/></svg>
<div class="mi" style="left:33.70px;top:96px;letter-spacing:-0.093px">Existing Item...</div>
<div class="mi" style="left:246.50px;top:96px;letter-spacing:0.3px">Shift+Alt+A</div>
<div class="hl" style="left:2px;top:117px;width:330px;height:22px"></div>
<div class="mi" style="left:33.70px;top:118px;letter-spacing:-0.01px">New Scaffolded Item...</div>
<svg style="left:6px;top:142px" width="16" height="16" viewBox="0 0 16 16"><path d="M2.600 7.500V15.200H15.400V6.300H8.300V5.300H6.800" fill="#c8b47e" stroke="#a3730a" stroke-width="1.100" stroke-linejoin="miter"/><path d="M4.90 3.40L6.70 3.40M4.53 4.53L5.38 5.38M3.40 4.90L3.40 6.70M2.27 4.53L1.42 5.38M1.90 3.40L0.10 3.40M2.27 2.27L1.42 1.42M3.40 1.90L3.40 0.10M4.53 2.27L5.38 1.42" stroke="#a8720a" stroke-width="1.15" fill="none" stroke-linecap="round"/></svg>
<div class="mi" style="left:33.70px;top:140px;letter-spacing:-0.133px">New Folder</div>
<div class="sep" style="left:30px;top:163px;width:301px"></div>
<svg style="left:6px;top:169px" width="16" height="16" viewBox="0 0 16 16"><path d="M7.6 4.8L10.3 2.0999999999999996V8.399999999999999L7.6 11.1Z" fill="#f4f5f9" stroke="#101010" stroke-width="0.95" stroke-linejoin="round"/><path d="M1 4.8L3.7 2.0999999999999996H10.3L7.6 4.8Z" fill="#c3c8dc" stroke="#101010" stroke-width="0.95" stroke-linejoin="round"/><rect x="1" y="4.8" width="6.60" height="6.30" fill="#f6f7fb" stroke="#101010" stroke-width="1.10" stroke-linejoin="round"/><path d="M2.3 6.6H4.8M2.3 8.6H4" stroke="#101010" stroke-width="0.9" fill="none"/><path d="M12.2 7.7L15.0 4.9V11.399999999999999L12.2 14.2Z" fill="#f4f5f9" stroke="#101010" stroke-width="0.95" stroke-linejoin="round"/><path d="M5.9 7.7L8.7 4.9H15.0L12.2 7.7Z" fill="#c3c8dc" stroke="#101010" stroke-width="0.95" stroke-linejoin="round"/><rect x="5.9" y="7.7" width="6.30" height="6.50" fill="#f6f7fb" stroke="#101010" stroke-width="1.10" stroke-linejoin="round"/><path d="M7.2 9.5H9.7M7.2 11.5H8.9" stroke="#101010" stroke-width="0.9" fill="none"/></svg>
<div class="mi" style="left:33.70px;top:167px;letter-spacing:-0.031px">Container Orchestrator Support...</div>
<svg style="left:6px;top:191px" width="16" height="16" viewBox="0 0 16 16"><path d="M11.8 4.5L14.600000000000001 1.7000000000000002V10.600000000000001L11.8 13.4Z" fill="#f4f5f9" stroke="#101010" stroke-width="0.95" stroke-linejoin="round"/><path d="M2.7 4.5L5.5 1.7000000000000002H14.600000000000001L11.8 4.5Z" fill="#c3c8dc" stroke="#101010" stroke-width="0.95" stroke-linejoin="round"/><rect x="2.7" y="4.5" width="9.10" height="8.90" fill="#f6f7fb" stroke="#101010" stroke-width="1.10" stroke-linejoin="round"/><path d="M4.0 6.3H6.5M4.0 8.3H5.7" stroke="#101010" stroke-width="0.9" fill="none"/></svg>
<div class="mi" style="left:33.70px;top:189px;letter-spacing:-0.075px">Docker Support...</div>
<div class="sep" style="left:30px;top:212px;width:301px"></div>
<svg style="left:6px;top:218px" width="16" height="16" viewBox="0 0 16 16"><path d="M1.1 4.1H6.9M4 1.1999999999999997V7.0" stroke="#1e7b1e" stroke-width="1.8" fill="none"/><path d="M11.200 1C8.600 1 6.800 2.900 6.800 5.200C6.800 6.500 7.300 7.300 8 8.100C8.600 8.800 8.900 9.500 9 10.600H13.300C13.400 9.500 13.800 8.800 14.400 8.100C15.100 7.300 15.500 6.500 15.500 5.200C15.500 2.900 13.700 1 11.200 1Z" fill="#68217a"/><path d="M9.300 4.200H13.100M10.200 4.200V7.800M12.200 4.200V7.800" stroke="#e9d6f0" stroke-width="0.8" fill="none"/><path d="M8.800 12.300H12.300M8.800 14.400H12.300" stroke="#68217a" stroke-width="1.100"/></svg>
<div class="mi" style="left:34.70px;top:216px;letter-spacing:-0.006px">Application Insights Telemetry...</div>
<div class="sep" style="left:30px;top:239px;width:301px"></div>
<svg style="left:6px;top:245px" width="16" height="16" viewBox="0 0 16 16"><g fill="none" stroke="#151515" stroke-width="1.05"><circle cx="8" cy="7.9" r="6.3" fill="none"/><ellipse cx="8" cy="7.9" rx="2.83" ry="6.3"/><path d="M1.7000000000000002 7.9H14.3M2.58 4.75H13.42M2.58 11.05H13.42"/></g><path d="M3.600 8.600H9.800V10.500H7.600V15.300H0.700V13.400H3.600Z" fill="#f4e3dd" stroke="#d2401c" stroke-width="1.100" stroke-linejoin="round"/><path d="M4.800 9.800V13.300M2 14.400H4.500M8.300 9.600H9" stroke="#e8a08c" stroke-width="0.800" fill="none"/></svg>
<div class="mi" style="left:33.70px;top:243px;letter-spacing:-0.067px">Client-Side Library...</div>
<div class="sep" style="left:30px;top:266px;width:301px"></div>
<svg style="left:6px;top:272px" width="16" height="16" viewBox="0 0 16 16"><path d="M9.10 4.20L9.10 1.90M11.72 5.28L13.34 3.66M12.80 7.90L15.10 7.90M11.72 10.52L13.34 12.14M9.10 11.60L9.10 13.90" stroke="#10a887" stroke-width="2.2" fill="none"/><path d="M7.30 4.78A3.60 3.60 0 1 1 7.30 11.02" fill="none" stroke="#10a887" stroke-width="2.2"/><rect x="8.200" y="7" width="1.900" height="1.900" fill="#118f8f"/><g fill="#12a08c"><rect x="1.300" y="7" width="1.700" height="1.800"/><rect x="3.700" y="7.100" width="1" height="1.600"/><rect x="3.300" y="3.600" width="1.700" height="1.700"/><rect x="3.300" y="10.500" width="1.700" height="1.700"/><rect x="5.500" y="5.700" width="1.300" height="1.300"/><rect x="5.500" y="8.900" width="1.300" height="1.300"/></g></svg>
<div class="mi" style="left:33.70px;top:270px;letter-spacing:0.017px">Machine Learning Model...</div>
<div class="sep" style="left:30px;top:293px;width:301px"></div>
<div class="mi" style="left:33.70px;top:297px;letter-spacing:-0.157px">New Azure WebJob Project</div>
<div class="mi" style="left:33.70px;top:319px;letter-spacing:-0.219px">Existing Project as Azure WebJob</div>
<div class="sep" style="left:30px;top:342px;width:301px"></div>
<svg style="left:6px;top:348px" width="16" height="16" viewBox="0 0 16 16"><path d="M0.0 3.5H6.8M3.4 0.10000000000000009V6.9" stroke="#1e8e1e" stroke-width="1.2" fill="none"/><g fill="none" stroke="#a8720a" stroke-width="1.1"><path d="M4.300 8.300L5.600 9.400L8.200 5.400L9.300 6.800"/><path d="M9.300 6.500V11.600H12.300M9.300 7.800H12.200"/><circle cx="13.600" cy="8" r="1.500"/><circle cx="13.600" cy="12.300" r="1.500"/></g></svg>
<div class="mi" style="left:33.70px;top:346px;letter-spacing:-0.486px">Class...</div>
<div class="sep" style="left:30px;top:369px;width:301px"></div>
<svg style="left:6px;top:375px" width="16" height="16" viewBox="0 0 16 16"><path d="M2.6 1.7H10.1L13.5 5.1V14.3H2.6Z" fill="#dcdfee" stroke="#4a4a50" stroke-width="1" stroke-linejoin="round"/><path d="M10.1 1.7V5.1H13.5Z" fill="#4a4a50"/></svg>
<div class="mi" style="left:33.70px;top:373px;letter-spacing:0.027px">New EditorConfig</div>
</div>
</body></html>
